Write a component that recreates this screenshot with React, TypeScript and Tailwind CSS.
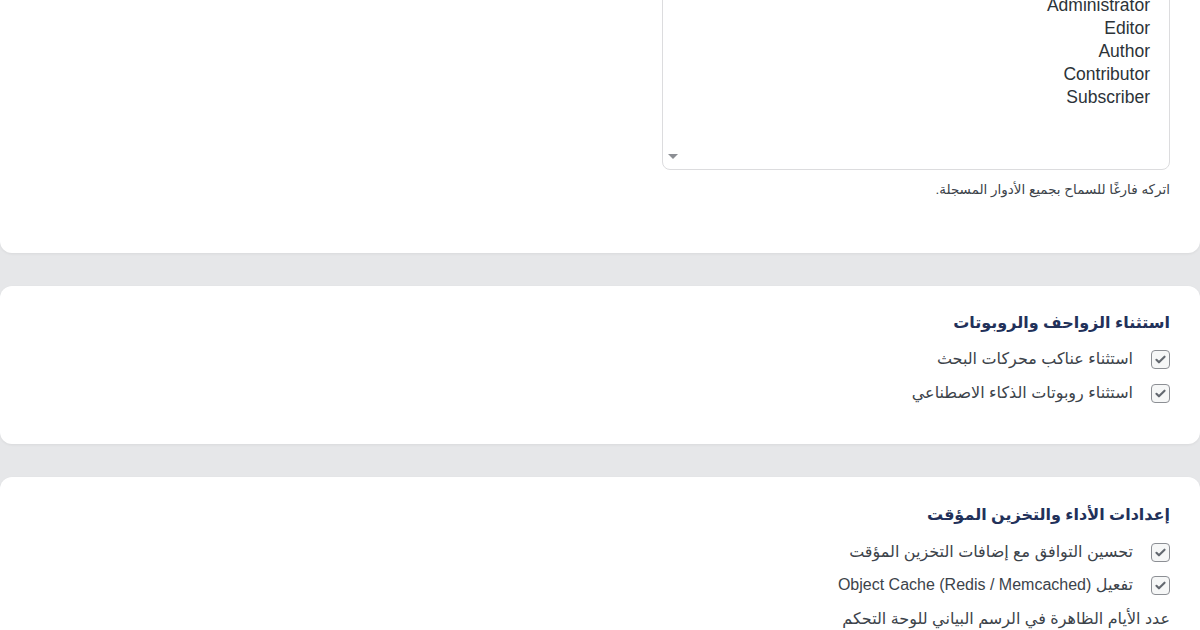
import React from 'react';

const roles = ['Administrator', 'Editor', 'Author', 'Contributor', 'Subscriber'];

function CheckMark() {
  return (
    <span className="flex h-[19px] w-[19px] shrink-0 items-center justify-center rounded-[4px] border border-[#8c8f94] bg-[#f6f7f7]">
      <svg viewBox="0 0 16 16" className="h-[13px] w-[13px]">
        <path
          d="M3 8.4l3.1 3.1L13 4.6"
          fill="none"
          stroke="#646970"
          strokeWidth="2.6"
          strokeLinecap="round"
          strokeLinejoin="round"
        />
      </svg>
    </span>
  );
}

function CheckRow({ label }: { label: string }) {
  return (
    <label className="flex items-center gap-[18px] text-[16px] leading-[20px] text-[#3c434a]">
      <CheckMark />
      <span>{label}</span>
    </label>
  );
}

function Card({ children, className = '' }: { children: React.ReactNode; className?: string }) {
  return (
    <section className={`rounded-[12px] bg-white px-[30px] shadow-[0_1px_3px_rgba(0,0,0,0.06)] ${className}`}>
      {children}
    </section>
  );
}

export default function App() {
  return (
    <div
      dir="rtl"
      className="h-[630px] overflow-hidden bg-[#e6e7e9]"
      style={{ fontFamily: '"Liberation Sans", "DejaVu Sans", sans-serif' }}
    >
      <div className="-mt-[60px] flex flex-col gap-[33px]">
        {/* roles filter */}
        <Card className="pb-[55px] pt-[30px]">
          <div className="relative h-[200px] w-[508px] rounded-[8px] border border-[#dcdcde] bg-white pr-[19px] pt-[23px]">
            <ul className="text-right text-[17.5px] leading-[23px] text-[#2c3338]">
              {roles.map((r) => (
                <li key={r}>{r}</li>
              ))}
            </ul>
            <span className="absolute bottom-[10px] left-[5px] h-0 w-0 border-x-[5px] border-t-[5px] border-x-transparent border-t-[#8c8f94]" />
          </div>
          <p className="mt-[12px] text-[13.5px] leading-[16px] text-[#3c434a]">
            اتركه فارغًا للسماح بجميع الأدوار المسجلة.
          </p>
        </Card>

        {/* crawlers & bots */}
        <Card className="h-[158px] pt-[25px]">
          <h2 className="text-[16px] font-bold leading-[24px] text-[#22315a]">
            استثناء الزواحف والروبوتات
          </h2>
          <div className="mt-[14px] flex flex-col gap-[14px]">
            <CheckRow label="استثناء عناكب محركات البحث" />
            <CheckRow label="استثناء روبوتات الذكاء الاصطناعي" />
          </div>
        </Card>

        {/* performance & caching */}
        <Card className="h-[200px] pt-[26px]">
          <h2 className="text-[16px] font-bold leading-[24px] text-[#22315a]">
            إعدادات الأداء والتخزين المؤقت
          </h2>
          <div className="mt-[15px] flex flex-col gap-[13px]">
            <CheckRow label="تحسين التوافق مع إضافات التخزين المؤقت" />
            <CheckRow label="تفعيل Object Cache (Redis / Memcached)" />
          </div>
          <p className="mt-[14px] text-[16px] leading-[20px] text-[#3c434a]">
            عدد الأيام الظاهرة في الرسم البياني للوحة التحكم
          </p>
        </Card>
      </div>
    </div>
  );
}
